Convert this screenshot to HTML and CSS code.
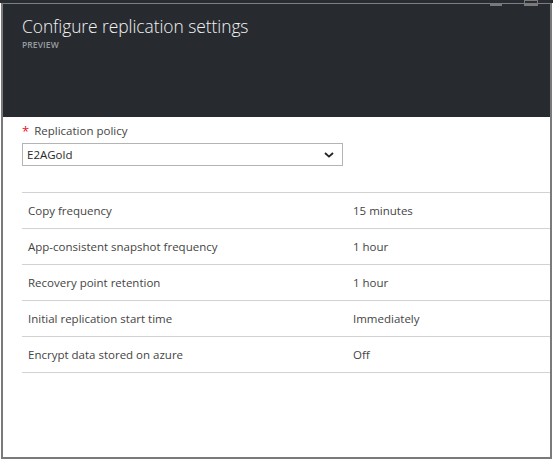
FILE: index.html
```html
<!DOCTYPE html>
<html lang="en">
<head>
<meta charset="utf-8">
<title>Configure replication settings</title>
<link rel="stylesheet" href="styles.css">
</head>
<body>
<div class="window">
  <div class="controls">
    <span class="ctl-min"></span>
    <span class="ctl-max"></span>
  </div>
  <header class="header">
    <h1 class="title">Configure replication settings</h1>
    <div class="subtitle">PREVIEW</div>
  </header>
  <section class="content">
    <div class="field">
      <label class="field-label"><span class="req">*</span>Replication policy</label>
      <div class="select">
        <span class="select-value">E2AGold</span>
        <svg class="chevron" width="10" height="6" viewBox="0 0 10 6"><path d="M1 1 L5 4.6 L9 1" fill="none" stroke="#222" stroke-width="1.8"/></svg>
      </div>
    </div>
    <div class="table">
      <div class="row"><span class="cell-name">Copy frequency</span><span class="cell-value">15 minutes</span></div>
      <div class="row"><span class="cell-name">App-consistent snapshot frequency</span><span class="cell-value">1 hour</span></div>
      <div class="row"><span class="cell-name">Recovery point retention</span><span class="cell-value">1 hour</span></div>
      <div class="row"><span class="cell-name">Initial replication start time</span><span class="cell-value">Immediately</span></div>
      <div class="row"><span class="cell-name">Encrypt data stored on azure</span><span class="cell-value">Off</span></div>
    </div>
  </section>
</div>
</body>
</html>
```

FILE: styles.css
```css
* { box-sizing: border-box; }
html, body { margin: 0; padding: 0; }
body {
  width: 553px;
  height: 460px;
  overflow: hidden;
  background: linear-gradient(#292d32 0 3px, #ffffff 3px);
  font-family: "Open Sans", "Noto Sans", sans-serif;
  color: #444;
}
.window {
  position: relative;
  margin: 3px 1px 0 1px;
  width: 551px;
  height: 456px;
  border-top: 1px solid #7b7f83;
  border-left: 2px solid #7a7a7a;
  border-right: 2px solid #7a7a7a;
  border-bottom: 2px solid #7a7a7a;
  background: #fff;
}
.controls {
  position: absolute;
  top: -4px;
  left: 487px;
  width: 60px;
  height: 7px;
}
.ctl-min {
  position: absolute;
  left: 0;
  top: 3px;
  width: 12px;
  height: 3px;
  background: #7a7a7a;
}
.ctl-max {
  position: absolute;
  left: 34px;
  top: 0;
  width: 14px;
  height: 6px;
  border: 1px solid #7a7a7a;
  border-bottom-width: 3px;
  background: #292d32;
}
.header {
  height: 113px;
  background: #272b30;
  padding: 10px 0 0 19px;
}
.title {
  margin: 0;
  font-weight: 300;
  font-size: 17.4px;
  line-height: 24px;
  color: #f2f2f2;
  letter-spacing: -0.05px;
}
.subtitle {
  margin-top: 2px;
  font-size: 8.5px;
  font-weight: 600;
  line-height: 10px;
  color: #9a9da0;
  letter-spacing: 0.1px;
}
.content {
  padding: 6px 0 0 19px;
}
.field-label {
  display: block;
  height: 16px;
  font-size: 11.5px;
  line-height: 16px;
  color: #444;
  margin-bottom: 4px;
}
.req {
  color: #e81123;
  margin-right: 5px;
  font-size: 13px;
  line-height: 16px;
  display: inline-block;
  height: 16px;
  vertical-align: top;
}
.select {
  width: 321px;
  height: 23px;
  border: 1px solid #b4b4b4;
  display: flex;
  align-items: center;
  justify-content: space-between;
  padding: 0 8px 0 4px;
  font-size: 11.5px;
  color: #2a2a2a;
}
.chevron { display: block; margin-top: 1px; }
.table {
  margin-top: 26px;
  border-top: 1px solid #d2d2d2;
}
.row {
  height: 36px;
  border-bottom: 1px solid #d2d2d2;
  display: flex;
  align-items: center;
  font-size: 11.5px;
  color: #444;
}
.cell-name {
  width: 331px;
  padding-left: 6px;
}
```
